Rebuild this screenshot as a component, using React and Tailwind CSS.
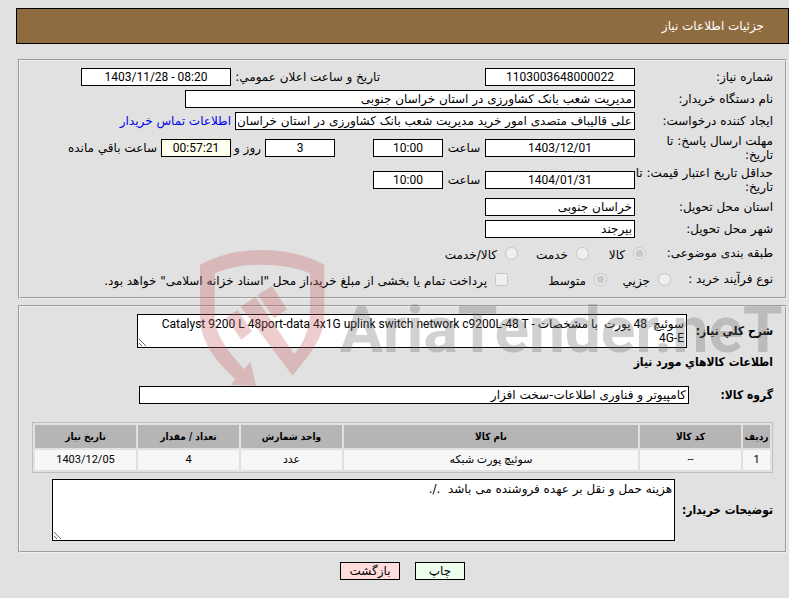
import { clsx } from 'clsx';

const headers = [
  { title: 'ردیف', width: 'w-[27px]' },
  { title: 'کد کالا', width: 'w-[101px]' },
  { title: 'نام کالا', width: '' },
  { title: 'واحد شمارش', width: 'w-[101px]' },
  { title: 'تعداد / مقدار', width: 'w-[101px]' },
  { title: 'تاریخ نیاز', width: 'w-[101px]' },
];

const items = [
  { row: '1', code: '--', name: 'سوئیچ پورت شبکه', unit: 'عدد', count: '4', date: '1403/12/05' },
];

const Field = ({ id, value, className, label }) => (
  <input
    id={id}
    aria-label={label}
    readOnly
    defaultValue={value}
    className={clsx('h-[18px] min-w-0 border border-black px-[2px] outline-none', className)}
  />
);

// dates, times and counters
const NumberField = ({ id, value, className, label }) => (
  <input
    id={id}
    aria-label={label}
    dir="ltr"
    readOnly
    defaultValue={value}
    className={clsx(
      'h-[18px] min-w-0 border border-black px-[2px] text-center font-[Roboto,sans-serif] outline-none',
      className
    )}
  />
);

const Row = ({ id, label, children }) => (
  <div className="flex items-center">
    <label htmlFor={id} className="w-[138px] shrink-0 leading-[14px]">{label}</label>
    {children}
  </div>
);

const Choice = ({ type = 'radio', name, label, checked, className }) => (
  <label className={clsx('flex items-center whitespace-nowrap', className)}>
    <input
      type={type}
      name={name}
      disabled
      defaultChecked={checked}
      className="h-[13px] w-[13px] shrink-0"
    />
    <span className="ms-2 pt-1">{label}</span>
  </label>
);

const Watermark = () => (
  <div className="pointer-events-none absolute left-[200px] top-[248px] flex opacity-30" dir="ltr" aria-hidden="true">
    <svg width="126" height="140" viewBox="60 54 378 420" fill="#c65c60">
      {/* shield with the arrow tail */}
      <path d="M228 468 152 464 167 447C110 398 60 335 60 260V105Q140 60 247 60Q353 60 433 105V250C433 320 400 360 338 437L182 230 226 200 343 373C375 330 390 295 390 240V130Q330 104 247 104Q165 104 104 130V255C104 310 135 355 193 418L211 395Z" />
      <path d="M138 263 173 240 216 304 184 329Z" />
      <path d="M233 195 276 168 321 238 283 265Z" />
    </svg>
    <span className="ms-[14px] mt-[35px] whitespace-nowrap font-[Roboto,sans-serif] text-[64px] font-bold leading-[96px] text-[#696969]">
      AriaTender.neT
    </span>
  </div>
);

export default function App() {
  return (
    <div
      dir="rtl"
      className="relative min-h-screen bg-[#e1e1e1] pl-4 pt-2 font-['DejaVu_Sans',sans-serif] text-xs text-black"
    >
      <header className="flex h-9 items-center border border-black bg-[#8f6c40] px-6 text-white">
        <h1>جزئیات اطلاعات نیاز</h1>
      </header>

      <form className="mx-[2px] mt-[15px] [&_input]:bg-white [&_textarea]:bg-white">
        <fieldset className="flex flex-col gap-1 border-2 border-[#f0f0f0] px-3 py-[7px] [border-style:groove]">
          <Row id="number" label="شماره نیاز:">
            <NumberField id="number" value="1103003648000022" className="w-[150px]" />
            <label htmlFor="announce" className="ms-[105px] w-[149px] whitespace-nowrap">تاریخ و ساعت اعلان عمومي:</label>
            <NumberField id="announce" value="1403/11/28 - 08:20" className="w-[150px]" />
          </Row>
          <Row id="org" label="نام دستگاه خریدار:">
            <Field id="org" value="مدیریت شعب بانک کشاورزی در استان خراسان جنوبی" className="w-[450px]" />
          </Row>
          <Row id="creator" label="ایجاد کننده درخواست:">
            <Field
              id="creator"
              value="علی قالیباف متصدی امور خرید مدیریت شعب بانک کشاورزی در استان خراسان جنوبی"
              className="w-[400px]"
            />
            <a href="#contact" className="ms-1 whitespace-nowrap text-[#0000ee]">اطلاعات تماس خریدار</a>
          </Row>
          <Row id="deadline" label="مهلت ارسال پاسخ: تا تاریخ:">
            <NumberField id="deadline" value="1403/12/01" className="w-[150px]" />
            <label htmlFor="deadline-time" className="w-[42px] text-center">ساعت</label>
            <NumberField id="deadline-time" value="10:00" className="w-[70px]" />
            <NumberField id="days" label="روز" value="3" className="mr-[38px] w-[70px]" />
            <label htmlFor="days" className="w-[34px] whitespace-nowrap ps-1">روز و</label>
            <NumberField id="left" value="00:57:21" className="w-[70px] bg-[#fffff0]!" />
            <label htmlFor="left" className="ms-1">ساعت باقي مانده</label>
          </Row>
          <Row id="validity" label="حداقل تاریخ اعتبار قیمت: تا تاریخ:">
            <NumberField id="validity" value="1404/01/31" className="w-[150px]" />
            <label htmlFor="validity-time" className="w-[42px] text-center">ساعت</label>
            <NumberField id="validity-time" value="10:00" className="w-[70px]" />
          </Row>
          <Row id="province" label="استان محل تحویل:">
            <Field id="province" value="خراسان جنوبی" className="w-[150px]" />
          </Row>
          <Row id="city" label="شهر محل تحویل:">
            <Field id="city" value="بیرجند" className="w-[150px]" />
          </Row>
          <div className="flex h-[22px] items-center">
            <span className="w-[127px] shrink-0">طبقه بندی موضوعی:</span>
            <Choice name="subject" label="کالا" checked className="w-[57px]" />
            <Choice name="subject" label="خدمت" className="w-[71px]" />
            <Choice name="subject" label="کالا/خدمت" />
          </div>
          <div className="flex h-[22px] items-center">
            <span className="w-[102px] shrink-0">نوع فرآیند خرید :</span>
            <Choice name="process" label="جزیي" className="w-[64px]" />
            <Choice name="process" label="متوسط" checked className="w-[99px]" />
            <Choice type="checkbox" label={'پرداخت تمام یا بخشی از مبلغ خرید،از محل "اسناد خزانه اسلامی" خواهد بود.'} />
          </div>
        </fieldset>

        <fieldset className="mt-[6px] border-2 border-[#f0f0f0] px-3 pb-[10px] pt-[7px] [border-style:groove]">
          <div className="flex items-center">
            <label htmlFor="summary" className="w-[86px] shrink-0 font-['DejaVu_Sans_Condensed',sans-serif] font-bold">شرح کلي نیاز:</label>
            <textarea
              id="summary"
              readOnly
              defaultValue="سوئیچ  48 پورت  با مشخصات - Catalyst 9200 L 48port-data 4x1G uplink switch network c9200L-48 T 4G-E"
              className="h-[34px] w-[550px] min-w-0 overflow-hidden border border-black py-[2px] pl-3 pr-[2px] font-[Roboto,'DejaVu_Sans',sans-serif] leading-[14px]"
            />
          </div>
          <h2 className="mt-1 font-['DejaVu_Sans_Condensed',sans-serif] font-bold leading-5">اطلاعات کالاهاي مورد نیاز</h2>
          <div className="mt-[14px] flex items-center">
            <label htmlFor="group" className="w-[84px] shrink-0 font-['DejaVu_Sans_Condensed',sans-serif] font-bold">گروه کالا:</label>
            <Field id="group" value="کامپیوتر و فناوری اطلاعات-سخت افزار" className="w-[550px]" />
          </div>
          <table className="mt-[18px] w-full max-w-[741px] table-fixed border-separate border-spacing-[2px] border border-[#c0c0c0] text-center">
            <thead className="font-['DejaVu_Sans_Condensed',sans-serif] text-[10px]">
              <tr className="h-[23px]">
                {headers.map(({ title, width }) => (
                  <th key={title} className={clsx('bg-[#b5b5b5] p-0 font-bold', width)}>{title}</th>
                ))}
              </tr>
            </thead>
            <tbody className="font-[Roboto,'DejaVu_Sans',sans-serif] text-[11px]">
              {items.map((item) => (
                <tr key={item.row} className="h-5 [&>td]:bg-[#f7f7f7] [&>td]:p-0">
                  <td>{item.row}</td>
                  <td>{item.code}</td>
                  <td>{item.name}</td>
                  <td>{item.unit}</td>
                  <td>{item.count}</td>
                  <td>{item.date}</td>
                </tr>
              ))}
            </tbody>
          </table>
          <div className="mt-[6px] flex items-center">
            <label htmlFor="notes" className="w-[98px] shrink-0 font-['DejaVu_Sans_Condensed',sans-serif] font-bold">توضیحات خریدار:</label>
            <textarea
              id="notes"
              readOnly
              defaultValue="هزینه حمل و نقل بر عهده فروشنده می باشد  ./."
              className="h-[62px] w-[623px] min-w-0 border border-black p-[2px] leading-[14px]"
            />
          </div>
        </fieldset>
      </form>

      <div className="mt-[9px] flex justify-center gap-[15px]">
        <button type="button" className="h-[18px] w-[50px] border border-black bg-[#eeffee] leading-4">چاپ</button>
        <button type="button" className="h-[18px] w-[60px] border border-black bg-[#ffdddd] leading-4">بازگشت</button>
      </div>

      <Watermark />
    </div>
  );
}
